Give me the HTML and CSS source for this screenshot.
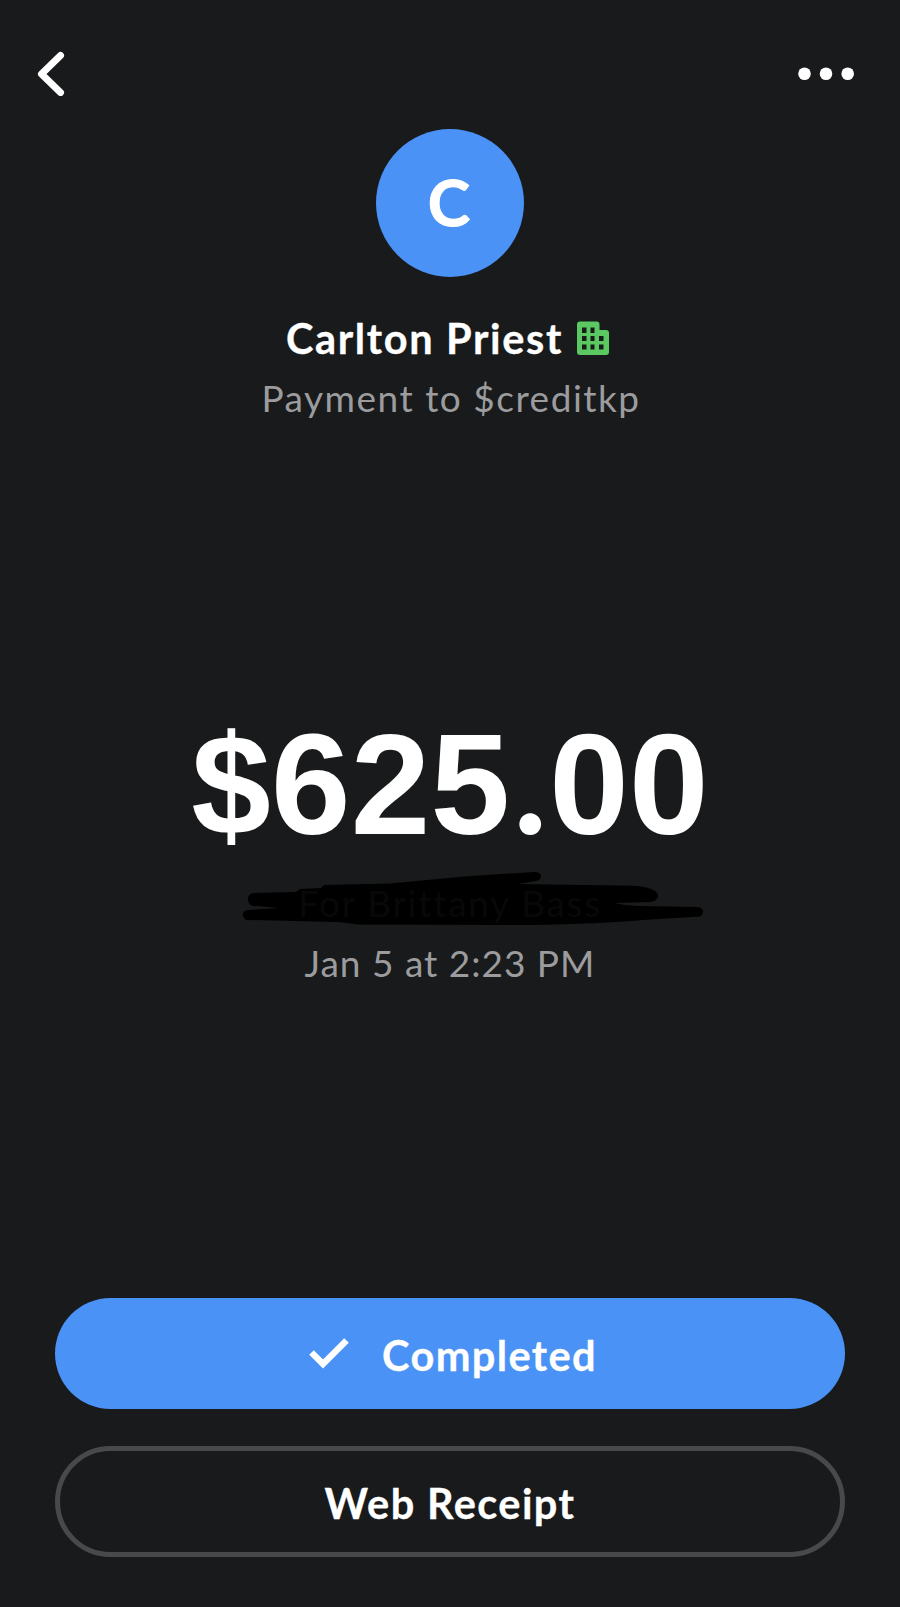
FILE: index.html
```html
<!DOCTYPE html>
<html lang="en">
<head>
<meta charset="utf-8">
<title>Payment receipt</title>
<link rel="stylesheet" href="styles.css">
</head>
<body>
<main class="screen">
  <header class="topbar">
    <svg class="back" viewBox="0 0 30 46" aria-label="Back"><path d="M24.500 5.500 5.500 24 24.500 42.500"/></svg>
    <svg class="more" viewBox="0 0 58 14" aria-label="More"><circle cx="7.500" cy="6.800" r="6.300"/><circle cx="29" cy="6.800" r="6.300"/><circle cx="50.700" cy="6.800" r="6.300"/></svg>
  </header>
  <section class="payee">
    <div class="avatar"><span>C</span></div>
    <h1 class="name"><span>Carlton Priest</span>
      <svg class="business" viewBox="0 0 32 34"><path fill-rule="evenodd" d="M3 .5H19.500Q22.500.5 22.500 3.500V9H29Q32 9 32 12V31Q32 34 29 34H3Q0 34 0 31V3.500Q0 .5 3 .5ZM5 6.500V12H9.500V6.500ZM13.500 6.500V12H17.500V6.500ZM5 15V20H9.500V15ZM13.500 15V20H17.500V15ZM22 15V20H26.500V15ZM5 23.500V28.500H9.500V23.500ZM13.500 23.500V28.500H17.500V23.500ZM22 23.500V28.500H26.500V23.500Z"/></svg>
    </h1>
    <p class="subtitle">Payment to $creditkp</p>
  </section>
  <section class="details">
    <div class="amount">$625<span class="point">.</span>00</div>
    <div class="note">
      <svg class="scribble" viewBox="0 0 490 64"><path d="M24 32Q17 33 18 39Q19 46 27 45L49 47 18 49Q12 50 13 55Q14 60 20 59L107 61Q119 62 127 63.500L300 64Q370 63 413 59L470 55.500Q473 54 473 50Q472 46 467 46L408 45Q396 45 384 42L420 41Q428 40 428 34Q426 27 407 25Q389 24 350 24L288 23 306 20Q311 19 311 15Q310 11 304 11L240 15 160 22.500 95 24Q93 24 91 27L70 28 66 31Z"/></svg>
      <span class="note-text">For Brittany Bass</span>
    </div>
    <p class="date">Jan 5 at 2:23 PM</p>
  </section>
  <footer class="actions">
    <button class="button primary">
      <svg class="check" viewBox="0 0 40 32"><path d="M2.500 14.500 14 26 37.500 2.500"/></svg>
      <span>Completed</span>
    </button>
    <button class="button outline"><span>Web Receipt</span></button>
  </footer>
</main>
</body>
</html>
```
FILE: styles.css
```css
* { box-sizing: border-box; }
body { margin: 0; background: #181a1b; color: #fff; font-family: Lato, "Liberation Sans", sans-serif; }
h1, p { margin: 0; }
.screen { width: 900px; height: 1607px; display: flex; flex-direction: column; }
.topbar { height: 129px; padding: 50px 45px 0 36px; display: flex; justify-content: space-between; align-items: flex-start; }
.back { width: 30px; height: 46px; fill: none; stroke: #fff; stroke-width: 7; stroke-linecap: round; stroke-linejoin: round; }
.more { width: 58px; height: 14px; margin-top: 17px; fill: #fff; }
.payee { height: 572px; display: flex; flex-direction: column; align-items: center; }
.avatar { width: 148px; height: 148px; padding: 0 2px 3px 0; border-radius: 50%; background: #4a92f5; display: flex; align-items: center; justify-content: center; font-size: 64px; font-weight: 700; line-height: 80px; -webkit-text-stroke: 1px #fff; }
.name { margin-top: 36px; height: 50px; padding-right: 5px; display: flex; align-items: center; gap: 14px; font-size: 41.5px; line-height: 50px; font-weight: 700; letter-spacing: 1.65px; white-space: nowrap; -webkit-text-stroke: 0.3px #fff; }
.business { width: 32px; height: 34px; fill: #5bc862; }
.subtitle, .date, .note { font-size: 37px; line-height: 46px; letter-spacing: 1px; color: #9c9c9e; white-space: nowrap; }
.subtitle { margin-top: 12px; padding-left: 2px; letter-spacing: 1.5px; }
.details { height: 597px; display: flex; flex-direction: column; align-items: center; }
.amount { font-family: "Liberation Sans", Arial, sans-serif; font-size: 143px; font-weight: 700; line-height: 167px; height: 180px; letter-spacing: 0.2px; }
.point { font-family: Lato, sans-serif; line-height: 0; margin: 0 2px 0 3px; }
.note { position: relative; width: 490px; margin-left: 50px; text-align: center; letter-spacing: 1.7px; }
.note-text { position: relative; left: -25px; top: -1px; color: #080809; }
.scribble { position: absolute; left: 0; top: -20px; width: 490px; height: 64px; fill: #000; }
.date { margin-top: 13px; }
.actions { padding: 0 55px; display: flex; flex-direction: column; gap: 37px; }
.button { height: 111px; border: 0; border-radius: 56px; padding: 1px 0 0; display: flex; align-items: center; justify-content: center; gap: 33px; font: 700 41.5px/50px Lato, "Liberation Sans", sans-serif; letter-spacing: 1.4px; color: #fff; background: none; -webkit-text-stroke: 0.3px #fff; }
.button span { padding-top: 2px; }
.primary { padding-left: 6px; background: #4a92f5; }
.outline { border: 5px solid #48494b; }
.check { width: 40px; height: 32px; fill: none; stroke: #fff; stroke-width: 6.5; }
```
